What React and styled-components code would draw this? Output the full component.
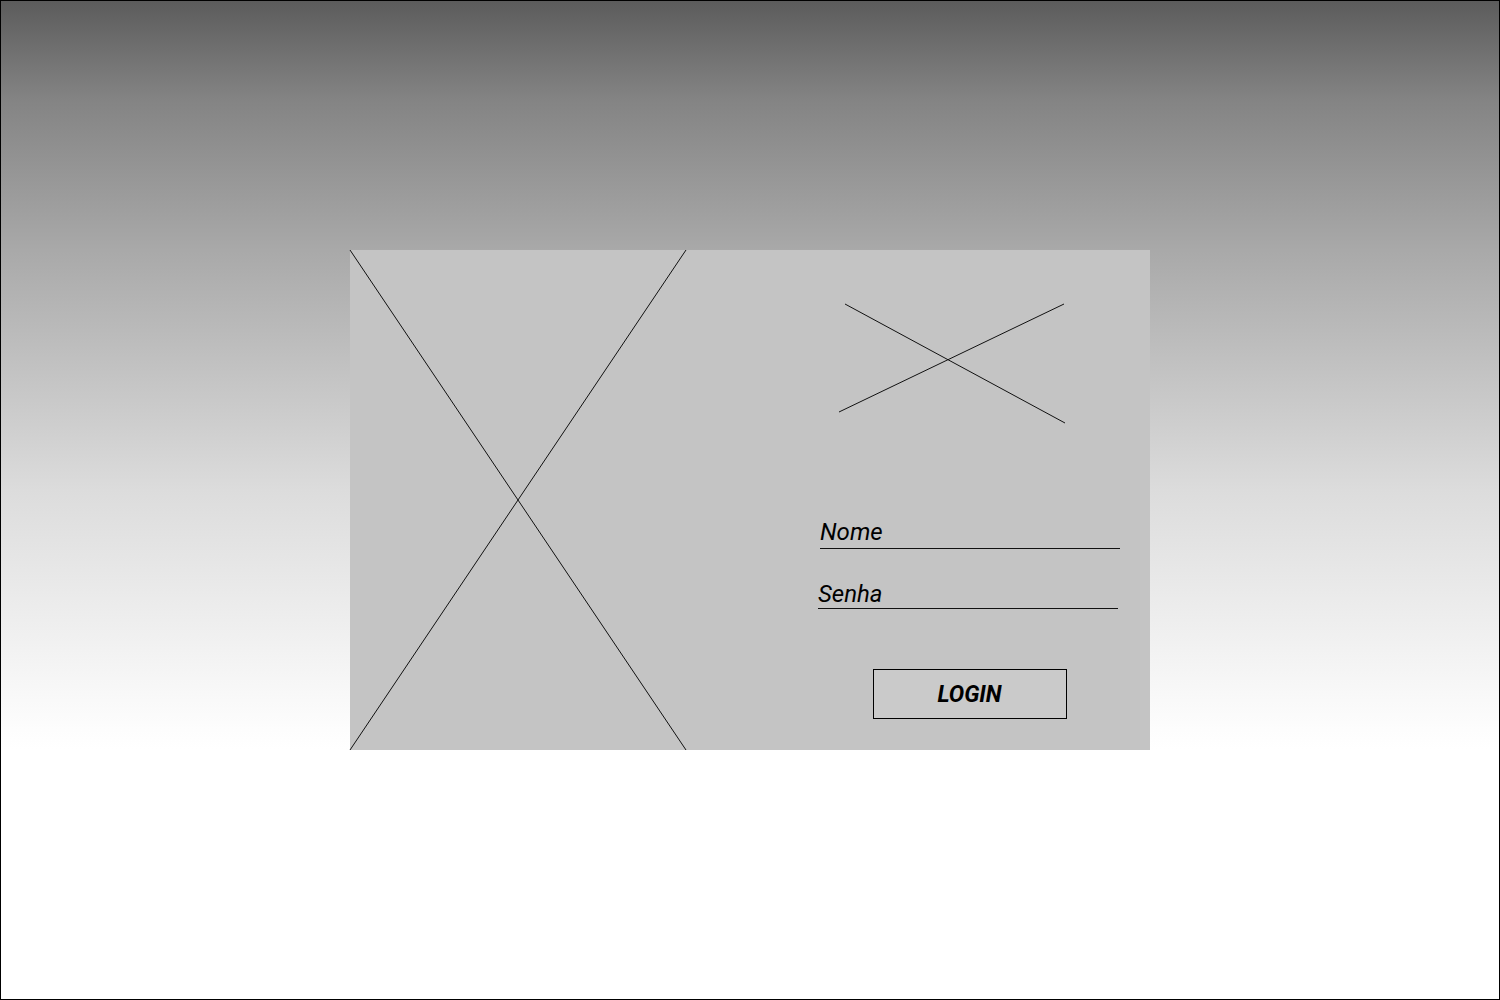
import * as React from "react"
import styled, { createGlobalStyle } from "styled-components";

const GlobalStyle = createGlobalStyle`
  html, body {
    margin: 0;
    padding: 0;
  }
  body {
    font-family: Roboto, "Liberation Sans", sans-serif;
    background: #ffffff;
  }
`

const Page = styled.div`
  box-sizing: border-box;
  width: 1500px;
  height: 1000px;
  border: 1px solid #000;
  background: linear-gradient(
    to bottom,
    #5c5c5c 0%,
    #848484 10%,
    #a9a9a9 25%,
    #dcdcdc 49%,
    #fdfdfd 73%,
    #ffffff 75%,
    #ffffff 100%
  );
  display: flex;
  justify-content: center;
  padding-top: 249px;
`

const Card = styled.section`
  width: 800px;
  height: 500px;
  background: #c4c4c4;
  display: grid;
  grid-template-columns: 336px 1fr;
`

const Placeholder = styled.svg`
  display: block;
  width: ${p => p.w}px;
  height: ${p => p.h}px;
  margin: ${p => p.m || 0};
  overflow: visible;
`

const Form = styled.form`
  display: flex;
  flex-direction: column;
  align-items: flex-start;
  padding: 0 30px 0 132px;
`

const Field = styled.div`
  box-sizing: border-box;
  width: 300px;
  margin-left: ${p => p.shift || 0}px;
  margin-top: ${p => p.top}px;
  padding-bottom: ${p => p.pad || 0}px;
  border-bottom: 1px solid #111;
  font-size: 24px;
  line-height: ${p => p.lh || 28}px;
  font-style: italic;
  color: #000;
`

const Button = styled.button`
  box-sizing: border-box;
  align-self: center;
  margin: 60px 0 0 1px;
  width: 194px;
  height: 50px;
  background: #cacaca;
  border: 1px solid #000;
  font-family: Roboto, "Liberation Sans", sans-serif;
  font-size: 23px;
  font-weight: 700;
  font-style: italic;
  color: #000;
  padding: 0;
  cursor: pointer;
`

const Cross = ({ w, h, m, a, b }) => (
  <Placeholder w={w} h={h} m={m} viewBox={`0 0 ${w} ${h}`} preserveAspectRatio="none">
    <line x1={a[0]} y1={a[1]} x2={a[2]} y2={a[3]} stroke="#111" strokeWidth="1" />
    <line x1={b[0]} y1={b[1]} x2={b[2]} y2={b[3]} stroke="#111" strokeWidth="1" />
  </Placeholder>
)

const App = () => (
  <>
    <GlobalStyle />
    <Page>
      <Card>
        <Cross w={336} h={500} a={[0, 0, 336, 500]} b={[336, 0, 0, 500]} />
        <Form onSubmit={e => e.preventDefault()}>
          <Cross w={227} h={120} m="54px 0 0 21px" a={[6, 0, 226, 119]} b={[225, 0, 0, 108]} />
          <Field top={94} shift={2} pad={2}>Nome</Field>
          <Field top={32} lh={27}>Senha</Field>
          <Button type="submit">LOGIN</Button>
        </Form>
      </Card>
    </Page>
  </>
);

export default App
